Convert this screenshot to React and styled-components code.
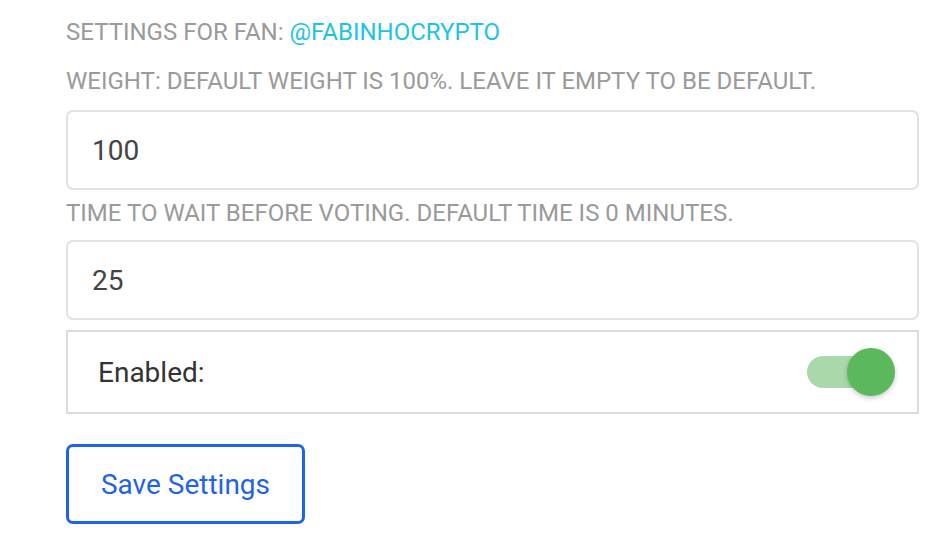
import React, { useState } from 'react';
import styled, { createGlobalStyle } from 'styled-components';

const GlobalStyle = createGlobalStyle`
  body {
    margin: 0;
    background: #fff;
    font-family: Roboto, "Liberation Sans", sans-serif;
  }
`;

const Page = styled.div`
  width: 853px;
  padding: 18px 0 0 66px;
  display: flex;
  flex-direction: column;
`;

const Label = styled.div`
  font-size: 24px;
  line-height: 28px;
  color: #9a9a9a;
  text-transform: uppercase;
  white-space: nowrap;
  margin-bottom: ${(p) => p.gap || 0}px;
`;

const Handle = styled.span`
  color: #1ec3e6;
`;

const Input = styled.input`
  box-sizing: border-box;
  width: 100%;
  height: 80px;
  border: 2px solid #e2e2e2;
  border-radius: 7px;
  padding: 0 24px;
  font-family: Roboto, "Liberation Sans", sans-serif;
  font-size: 28px;
  color: #444;
  outline: none;
  margin-bottom: ${(p) => p.gap || 0}px;
`;

const ToggleRow = styled.div`
  box-sizing: border-box;
  height: 84px;
  border: 2px solid #dcdcdc;
  display: flex;
  align-items: center;
  justify-content: space-between;
  padding: 0 22px 0 30px;
  margin-top: 10px;
`;

const ToggleLabel = styled.span`
  font-size: 28px;
  color: #333;
`;

const Switch = styled.button`
  position: relative;
  width: 88px;
  height: 48px;
  border: 0;
  padding: 0;
  background: transparent;
  cursor: pointer;
`;

const Track = styled.span`
  position: absolute;
  left: 0;
  top: 8px;
  width: 72px;
  height: 32px;
  border-radius: 16px;
  background: ${(p) => (p.on ? '#a9d8ab' : '#cfcfcf')};
`;

const Knob = styled.span`
  position: absolute;
  top: 0;
  left: ${(p) => (p.on ? '40px' : '0')};
  width: 48px;
  height: 48px;
  border-radius: 50%;
  background: ${(p) => (p.on ? '#5cb85c' : '#f5f5f5')};
  box-shadow: 0 2px 5px rgba(0, 0, 0, 0.22);
`;

const SaveButton = styled.button`
  align-self: flex-start;
  margin-top: 30px;
  width: 239px;
  height: 80px;
  border: 3px solid #1f63e9;
  border-radius: 7px;
  background: #fff;
  color: #1f63e9;
  font-family: Roboto, "Liberation Sans", sans-serif;
  font-size: 28px;
  cursor: pointer;
`;

export default function App() {
  const [weight, setWeight] = useState('100');
  const [wait, setWait] = useState('25');
  const [enabled, setEnabled] = useState(true);

  return (
    <>
      <GlobalStyle />
      <Page>
        <Label gap={21}>
          Settings for fan: <Handle>@fabinhocrypto</Handle>
        </Label>
        <Label gap={15}>Weight: default weight is 100%. Leave it empty to be default.</Label>
        <Input value={weight} onChange={(e) => setWeight(e.target.value)} gap={9} />
        <Label gap={13}>Time to wait before voting. Default time is 0 minutes.</Label>
        <Input value={wait} onChange={(e) => setWait(e.target.value)} />
        <ToggleRow>
          <ToggleLabel>Enabled:</ToggleLabel>
          <Switch onClick={() => setEnabled(!enabled)} aria-label="Enabled">
            <Track on={enabled} />
            <Knob on={enabled} />
          </Switch>
        </ToggleRow>
        <SaveButton>Save Settings</SaveButton>
      </Page>
    </>
  );
}
